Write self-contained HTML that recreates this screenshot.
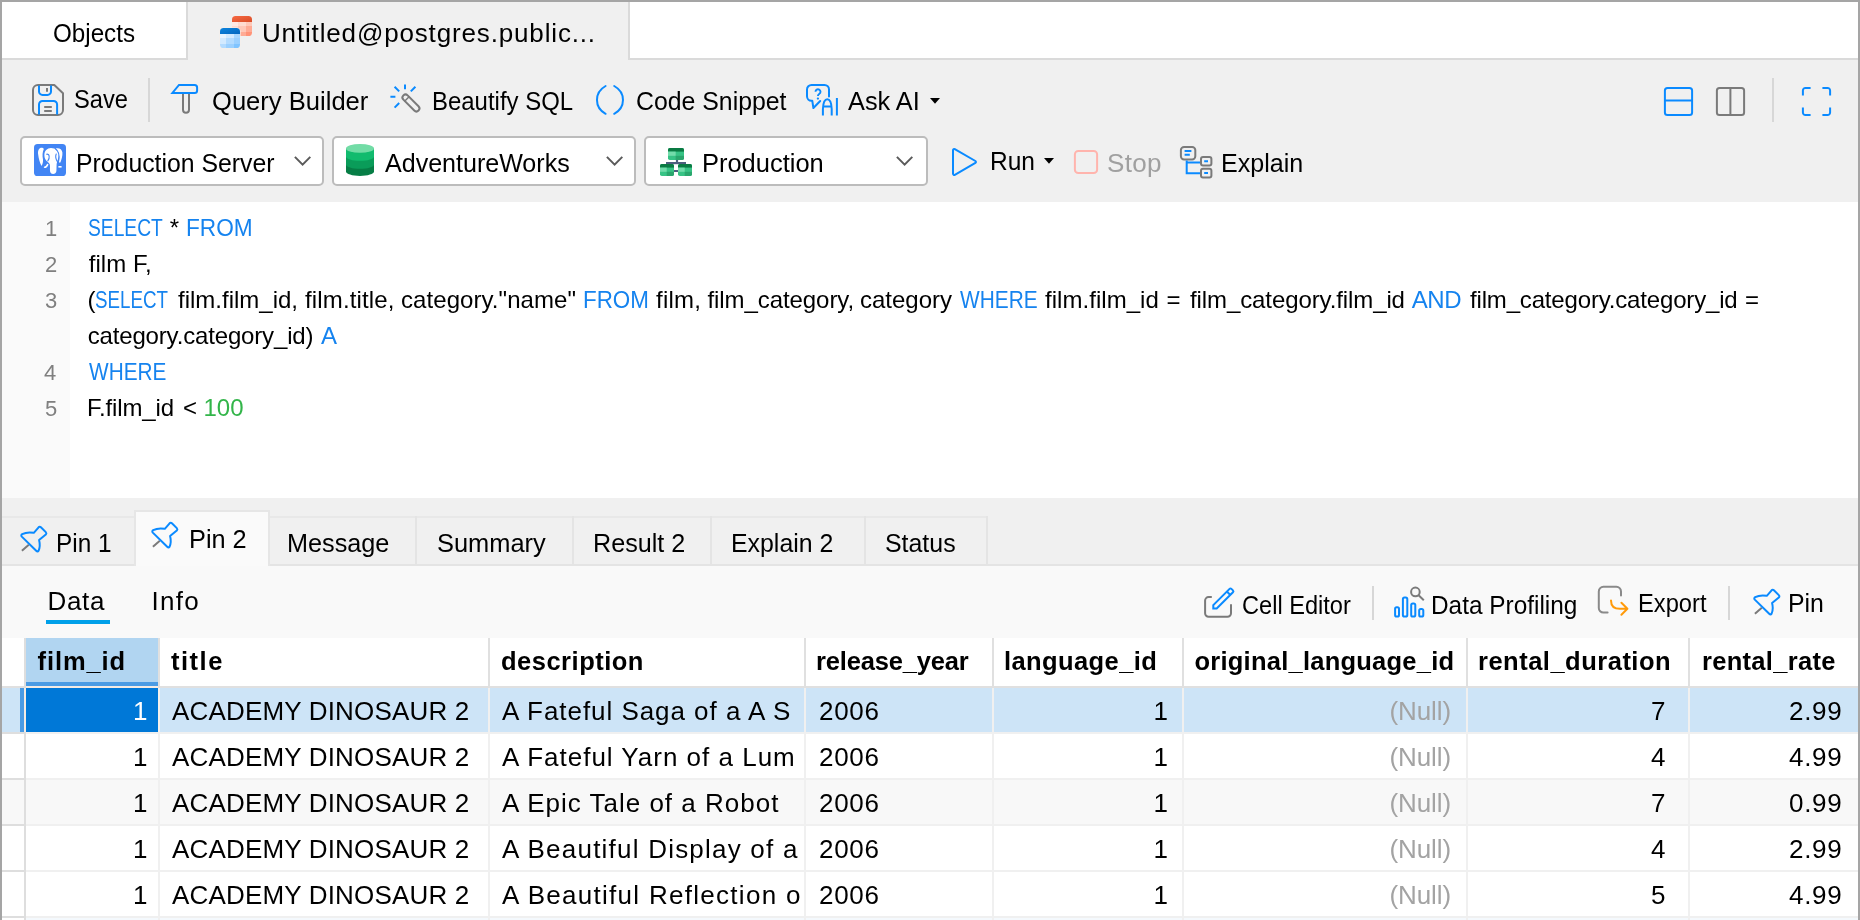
<!DOCTYPE html>
<html><head><meta charset="utf-8"><title>Navicat - Query</title>
<style>
html,body{margin:0;padding:0}
body{width:1860px;height:920px;overflow:hidden;position:relative;background:#f0f0f0;font-family:"Liberation Sans",sans-serif}
body>div{position:absolute}
svg{position:absolute;overflow:visible}
.t{position:absolute;font-size:26px;line-height:26px;white-space:pre;transform-origin:0 0}
</style></head><body>
<div style="left:0px;top:0px;width:1860px;height:60px;background:#fff;"></div>
<div style="left:188px;top:2px;width:440px;height:58px;background:#f0f0f0;"></div>
<div style="left:2px;top:58px;width:186px;height:2px;background:#dadada;"></div>
<div style="left:186px;top:2px;width:2px;height:58px;background:#dadada;"></div>
<div style="left:628px;top:2px;width:2px;height:58px;background:#dadada;"></div>
<div style="left:630px;top:58px;width:1228px;height:2px;background:#dadada;"></div>
<div style="left:0px;top:60px;width:1860px;height:142px;background:#f0f0f0;"></div>
<div style="left:148px;top:78px;width:2px;height:44px;background:#d7d7d7;"></div>
<div style="left:1772px;top:78px;width:2px;height:44px;background:#d7d7d7;"></div>
<div style="left:20px;top:136px;width:300px;height:46px;background:#fff;border:2px solid #bcbcbc;border-radius:5px;box-sizing:content-box"></div>
<div style="left:332px;top:136px;width:300px;height:46px;background:#fff;border:2px solid #bcbcbc;border-radius:5px;box-sizing:content-box"></div>
<div style="left:644px;top:136px;width:280px;height:46px;background:#fff;border:2px solid #bcbcbc;border-radius:5px;box-sizing:content-box"></div>
<div style="left:0px;top:202px;width:1860px;height:296px;background:#fff;"></div>
<div style="left:2px;top:202px;width:68px;height:296px;background:#fafafa;"></div>
<div style="left:0px;top:498px;width:1860px;height:67px;background:#f0f0f0;"></div>
<div style="left:0px;top:565px;width:1860px;height:73px;background:#f9f9f9;"></div>
<div style="left:2px;top:516px;width:986px;height:2px;background:#e8e8e8;"></div>
<div style="left:2px;top:564px;width:1856px;height:2px;background:#e4e4e4;"></div>
<div style="left:415px;top:516px;width:2px;height:49px;background:#e4e4e4;"></div>
<div style="left:572px;top:516px;width:2px;height:49px;background:#e4e4e4;"></div>
<div style="left:710px;top:516px;width:2px;height:49px;background:#e4e4e4;"></div>
<div style="left:864px;top:516px;width:2px;height:49px;background:#e4e4e4;"></div>
<div style="left:986px;top:516px;width:2px;height:49px;background:#e4e4e4;"></div>
<div style="left:268px;top:516px;width:2px;height:49px;background:#e4e4e4;"></div>
<div style="left:134px;top:510px;width:132px;height:54px;background:#fafafa;border:2px solid #e6e6e6;border-bottom:none;box-sizing:content-box"></div>
<div style="left:46px;top:620px;width:64px;height:4px;background:#00a0e9;"></div>
<div style="left:1372px;top:586px;width:2px;height:34px;background:#d7d7d7;"></div>
<div style="left:1728px;top:586px;width:2px;height:34px;background:#d7d7d7;"></div>
<div style="left:2px;top:638px;width:1856px;height:282px;background:#fff;"></div>
<div style="left:26px;top:638px;width:132px;height:48px;background:#b1d5f1;"></div>
<div style="left:26px;top:682px;width:132px;height:4px;background:#4a9be4;"></div>
<div style="left:2px;top:686px;width:1856px;height:2px;background:#e0e0e0;"></div>
<div style="left:2px;top:688px;width:1856px;height:44px;background:#cde4f7;"></div>
<div style="left:2px;top:780px;width:1856px;height:44px;background:#f8f8f8;"></div>
<div style="left:20px;top:688px;width:4px;height:44px;background:#4a9be4;"></div>
<div style="left:26px;top:686px;width:132px;height:2px;background:#f3ebe4;"></div>
<div style="left:26px;top:688px;width:132px;height:44px;background:#0078d7;"></div>
<div style="left:26px;top:732px;width:1832px;height:2px;background:#f0f0f0;"></div>
<div style="left:2px;top:732px;width:22px;height:2px;background:#dedede;"></div>
<div style="left:26px;top:778px;width:1832px;height:2px;background:#f0f0f0;"></div>
<div style="left:2px;top:778px;width:22px;height:2px;background:#dedede;"></div>
<div style="left:26px;top:824px;width:1832px;height:2px;background:#f0f0f0;"></div>
<div style="left:2px;top:824px;width:22px;height:2px;background:#dedede;"></div>
<div style="left:26px;top:870px;width:1832px;height:2px;background:#f0f0f0;"></div>
<div style="left:2px;top:870px;width:22px;height:2px;background:#dedede;"></div>
<div style="left:26px;top:916px;width:1832px;height:2px;background:#f0f0f0;"></div>
<div style="left:2px;top:916px;width:22px;height:2px;background:#dedede;"></div>
<div style="left:158px;top:638px;width:2px;height:282px;background:#f0f0f0;"></div>
<div style="left:488px;top:638px;width:2px;height:282px;background:#f0f0f0;"></div>
<div style="left:804px;top:638px;width:2px;height:282px;background:#f0f0f0;"></div>
<div style="left:992px;top:638px;width:2px;height:282px;background:#f0f0f0;"></div>
<div style="left:1182px;top:638px;width:2px;height:282px;background:#f0f0f0;"></div>
<div style="left:1466px;top:638px;width:2px;height:282px;background:#f0f0f0;"></div>
<div style="left:1688px;top:638px;width:2px;height:282px;background:#f0f0f0;"></div>
<div style="left:158px;top:638px;width:2px;height:50px;background:#e0e0e0;"></div>
<div style="left:488px;top:638px;width:2px;height:50px;background:#e0e0e0;"></div>
<div style="left:804px;top:638px;width:2px;height:50px;background:#e0e0e0;"></div>
<div style="left:992px;top:638px;width:2px;height:50px;background:#e0e0e0;"></div>
<div style="left:1182px;top:638px;width:2px;height:50px;background:#e0e0e0;"></div>
<div style="left:1466px;top:638px;width:2px;height:50px;background:#e0e0e0;"></div>
<div style="left:1688px;top:638px;width:2px;height:50px;background:#e0e0e0;"></div>
<div style="left:24px;top:638px;width:2px;height:282px;background:#dedede;"></div>
<div style="left:24px;top:688px;width:2px;height:44px;background:#f3ebe4;"></div>
<div style="left:158px;top:688px;width:2px;height:44px;background:#f5f1ec;"></div>
<div style="left:26px;top:918px;width:1832px;height:2px;background:#f4f9fd;"></div>
<div style="left:158px;top:918px;width:2px;height:2px;background:#f0f0f0;"></div>
<div style="left:488px;top:918px;width:2px;height:2px;background:#f0f0f0;"></div>
<div style="left:804px;top:918px;width:2px;height:2px;background:#f0f0f0;"></div>
<div style="left:992px;top:918px;width:2px;height:2px;background:#f0f0f0;"></div>
<div style="left:1182px;top:918px;width:2px;height:2px;background:#f0f0f0;"></div>
<div style="left:1466px;top:918px;width:2px;height:2px;background:#f0f0f0;"></div>
<div style="left:1688px;top:918px;width:2px;height:2px;background:#f0f0f0;"></div>
<div style="left:0px;top:0px;width:1860px;height:2px;background:#a5a5a5;"></div>
<div style="left:0px;top:0px;width:2px;height:920px;background:#a5a5a5;"></div>
<div style="left:1858px;top:0px;width:2px;height:920px;background:#a5a5a5;"></div>
<svg style="left:220px;top:16px" width="32" height="32" viewBox="0 0 32 32" fill="none" stroke-linecap="round" stroke-linejoin="round" ><defs><clipPath id="rt"><rect x="12" y="0" width="20" height="20" rx="3.6"/></clipPath><linearGradient id="rtg" x1="0" y1="0" x2="1" y2="1"><stop offset="0" stop-color="#f76a43"/><stop offset="1" stop-color="#d84c27"/></linearGradient></defs><g clip-path="url(#rt)" stroke="none"><rect x="12" y="0" width="20" height="6.2" fill="url(#rtg)"/><rect x="12" y="6" width="6" height="4" fill="#ffe9e4"/><rect x="18" y="6" width="8" height="4" fill="#ffdbd0"/><rect x="26" y="6" width="6" height="4" fill="#ffc8b8"/><rect x="12" y="10" width="6" height="6" fill="#ffdbd0"/><rect x="18" y="10" width="8" height="6" fill="#ffc8b8"/><rect x="26" y="10" width="6" height="6" fill="#ffab95"/><rect x="12" y="16" width="6" height="4" fill="#ffc8b8"/><rect x="18" y="16" width="8" height="4" fill="#ffab95"/><rect x="26" y="16" width="6" height="4" fill="#ff9378"/></g><rect x="-0.6" y="11.4" width="21.2" height="21.2" rx="4.2" fill="#f6efe9" stroke="none"/><defs><clipPath id="bt"><rect x="0" y="12" width="20" height="20" rx="3.6"/></clipPath><linearGradient id="btg" x1="0" y1="0" x2="1" y2="1"><stop offset="0" stop-color="#0c84de"/><stop offset="1" stop-color="#0566be"/></linearGradient></defs><g clip-path="url(#bt)" stroke="none"><rect x="0" y="12" width="20" height="6.2" fill="url(#btg)"/><rect x="0" y="18" width="6" height="4" fill="#e8f4ff"/><rect x="6" y="18" width="8" height="4" fill="#d3eaff"/><rect x="14" y="18" width="6" height="4" fill="#a9d7ff"/><rect x="0" y="22" width="6" height="6" fill="#d3eaff"/><rect x="6" y="22" width="8" height="6" fill="#b3dbff"/><rect x="14" y="22" width="6" height="6" fill="#9bd0ff"/><rect x="0" y="28" width="6" height="4" fill="#b3dbff"/><rect x="6" y="28" width="8" height="4" fill="#9bd0ff"/><rect x="14" y="28" width="6" height="4" fill="#80c4ff"/></g></svg>
<svg style="left:32px;top:84px" width="32" height="32" viewBox="0 0 32 32" fill="none" stroke-linecap="round" stroke-linejoin="round" ><path d="M6 1H22.3L31 9.2V26a5 5 0 0 1-5 5H6a5 5 0 0 1-5-5V6A5 5 0 0 1 6 1Z" stroke="#7a7a7a" stroke-width="2"/><path d="M7 1.6V7.4a3.5 3.5 0 0 0 3.5 3.5H15.5A3.5 3.5 0 0 0 19 7.4V1.6" stroke="#0a8aff" stroke-width="2" stroke-linecap="butt"/><path d="M15 4V7.7" stroke="#7a7a7a" stroke-width="2" stroke-linecap="butt"/><path d="M7 30.4V20.4a3.5 3.5 0 0 1 3.5-3.5H21.6a3.5 3.5 0 0 1 3.5 3.5V30.4" stroke="#0a8aff" stroke-width="2" stroke-linecap="butt"/><path d="M12.2 23H19.8M12.2 27H19.8" stroke="#7a7a7a" stroke-width="2" stroke-linecap="butt"/></svg>
<svg style="left:170px;top:84px" width="30" height="30" viewBox="0 0 30 30" fill="none" stroke-linecap="round" stroke-linejoin="round" ><path d="M13 9.8V25.8a3 3 0 0 0 6 0V9.8" stroke="#7a7a7a" stroke-width="2" stroke-linecap="butt"/><path d="M9 .9H24.6a2.5 2.5 0 0 1 2.5 2.5V6.4a2.5 2.5 0 0 1-2.5 2.5H2.4Z" stroke="#0a8aff" stroke-width="2" stroke-linejoin="miter"/></svg>
<svg style="left:390px;top:84px" width="32" height="30" viewBox="0 0 32 30" fill="none" stroke-linecap="round" stroke-linejoin="round" ><g transform="rotate(-45 20.8 18.8)"><rect x="17.8" y="8.3" width="6" height="21.4" rx="3" stroke="#7a7a7a" stroke-width="2"/><path d="M17.8 13.4H23.8" stroke="#7a7a7a" stroke-width="1.4"/></g><path d="M15 .6V5.2M4.6 2.8L9.2 7.4M25.4 2.8L20.8 7.4M.4 12.8H5.4M9.2 19L4.6 23.6" stroke="#0a8aff" stroke-width="2" stroke-linecap="butt"/></svg>
<svg style="left:595px;top:84px" width="30" height="32" viewBox="0 0 30 32" fill="none" stroke-linecap="round" stroke-linejoin="round" ><path d="M10.6 2C-.9 8.5-.9 23.5 10.6 29.8M19.2 2C30.9 8.5 30.9 23.5 19.2 29.8" stroke="#0a8aff" stroke-width="2"/></svg>
<svg style="left:806px;top:84px" width="34" height="32" viewBox="0 0 34 32" fill="none" stroke-linecap="round" stroke-linejoin="round" ><path d="M23 12.6V5.4A4.5 4.5 0 0 0 18.5 .9H5.5A4.5 4.5 0 0 0 1 5.4V12.3a4.5 4.5 0 0 0 4.5 4.5H6.3L7.4 24L14.2 17" stroke="#0a8aff" stroke-width="2"/><path d="M16.9 31.6V25Q17.3 15.2 21.3 15.2Q25.3 15.2 25.7 25V31.6M16.9 22.4H25.7M30.9 14.1V31.6" stroke="#0a8aff" stroke-width="2" stroke-linecap="butt"/><path d="M9.5 7.7A2.5 2.4 0 1 1 13.4 9.7C12.4 10.4 11.9 10.9 11.9 12" stroke="#0a8aff" stroke-width="1.9" stroke-linecap="butt"/><circle cx="11.9" cy="14.6" r="1.15" fill="#0a8aff" stroke="none"/></svg>
<svg style="left:930px;top:98px" width="10" height="6" viewBox="0 0 10 6" fill="none" stroke-linecap="round" stroke-linejoin="round" ><path d="M0 0H10L5 5.8Z" fill="#000" stroke="none"/></svg>
<svg style="left:1044px;top:158px" width="10" height="6" viewBox="0 0 10 6" fill="none" stroke-linecap="round" stroke-linejoin="round" ><path d="M0 0H10L5 5.8Z" fill="#000" stroke="none"/></svg>
<svg style="left:1664px;top:87px" width="29" height="29" viewBox="0 0 29 29" fill="none" stroke-linecap="round" stroke-linejoin="round" ><rect x=".9" y=".9" width="27.2" height="27.2" rx="2.6" stroke="#0a8aff" stroke-width="2"/><path d="M1 13.4H28" stroke="#0a8aff" stroke-width="2"/></svg>
<svg style="left:1716px;top:87px" width="29" height="29" viewBox="0 0 29 29" fill="none" stroke-linecap="round" stroke-linejoin="round" ><rect x=".9" y=".9" width="27.2" height="27.2" rx="2.6" stroke="#7a7a7a" stroke-width="2"/><path d="M14.4 1V28" stroke="#7a7a7a" stroke-width="2"/></svg>
<svg style="left:1802px;top:87px" width="29" height="29" viewBox="0 0 29 29" fill="none" stroke-linecap="round" stroke-linejoin="round" ><path d="M.9 8.4V3.4A2.5 2.5 0 0 1 3.4 .9H8.6M20.4 .9H25.6A2.5 2.5 0 0 1 28.1 3.4V8.4M28.1 20.6V25.6A2.5 2.5 0 0 1 25.6 28.1H20.4M8.6 28.1H3.4A2.5 2.5 0 0 1 .9 25.6V20.6" stroke="#0a8aff" stroke-width="2" stroke-linecap="butt"/></svg>
<svg style="left:34px;top:144px" width="32" height="32" viewBox="0 0 32 32" fill="none" stroke-linecap="round" stroke-linejoin="round" ><rect x="0" y="0" width="32" height="32" rx="3.6" fill="#4285f4" stroke="none"/><path d="M8 3.8C5.2 3.6 3.6 6.2 4.1 10C4.6 14.6 6 19.6 7.6 22C8.6 20.4 9.2 18 9 15.6C8.2 12 8.4 8 9.8 5C9.4 4.2 8.8 3.8 8 3.8Z" fill="#fff" stroke="none"/><path d="M21.6 4.6C24.6 3.4 28 5 28.4 8.4C28.7 11.8 27.4 15.6 26.4 18.6C25.6 19 24.8 18.4 24.8 17.6C25.8 13.6 25.4 8.4 21.6 4.6Z" fill="#fff" stroke="none"/><path d="M10.4 11.4C10.2 6.8 13.2 4 17 4C21.4 4 24.6 6.8 24.8 10.4C24.8 13.6 23.4 16.4 22.8 19C22.4 21.2 22.6 24.6 22.4 27C22.2 29 20.8 30 19.2 30C17.4 30 16.2 29 16 27C15.8 24.6 16.2 22.4 15.8 20.6C15.4 18.8 12.4 17.4 11.2 15C10.6 13.8 10.4 12.6 10.4 11.4Z" fill="#fff" stroke="none"/><path d="M21.4 4.8C24.6 7 25.8 11.6 24.6 17.4" stroke="#4285f4" stroke-width="1.1"/><path d="M12.6 10.2C15.4 9.6 16.2 13.6 13.8 16.8" stroke="#4285f4" stroke-width="1.1"/><path d="M22.2 10C21.2 12.4 22 15.4 23.4 17.6" stroke="#4285f4" stroke-width="1.1"/><path d="M10.6 23.2C12 23.2 13 22.2 13.6 20.6" stroke="#fff" stroke-width="1.6"/><path d="M24.4 22.8H27.6" stroke="#fff" stroke-width="1.6" stroke-linecap="butt"/></svg>
<svg style="left:294.4px;top:156.4px" width="18" height="10" viewBox="0 0 18 10" fill="none" stroke-linecap="round" stroke-linejoin="round" ><path d="M.9 .9L8.6 8.6L16.3 .9" stroke="#5a5a5a" stroke-width="2" stroke-linecap="butt" stroke-linejoin="miter"/></svg>
<svg style="left:606px;top:156.4px" width="18" height="10" viewBox="0 0 18 10" fill="none" stroke-linecap="round" stroke-linejoin="round" ><path d="M.9 .9L8.6 8.6L16.3 .9" stroke="#5a5a5a" stroke-width="2" stroke-linecap="butt" stroke-linejoin="miter"/></svg>
<svg style="left:896.4px;top:156.4px" width="18" height="10" viewBox="0 0 18 10" fill="none" stroke-linecap="round" stroke-linejoin="round" ><path d="M.9 .9L8.6 8.6L16.3 .9" stroke="#5a5a5a" stroke-width="2" stroke-linecap="butt" stroke-linejoin="miter"/></svg>
<svg style="left:346px;top:144px" width="28" height="32" viewBox="0 0 28 32" fill="none" stroke-linecap="round" stroke-linejoin="round" ><g stroke="none"><path d="M0 4.4V27.6C0 30 6.3 32 14 32S28 30 28 27.6V4.4Z" fill="#067d45"/><path d="M0 4.4V20.4C0 22.8 6.3 24.8 14 24.8S28 22.8 28 20.4V4.4Z" fill="#0a9c59"/><path d="M0 4.4V12.4C0 14.8 6.3 16.8 14 16.8S28 14.8 28 12.4V4.4Z" fill="#11bb6e"/><ellipse cx="14" cy="4.4" rx="14" ry="4.4" fill="#72dca6"/></g></svg>
<svg style="left:660px;top:148px" width="32" height="28" viewBox="0 0 32 28" fill="none" stroke-linecap="round" stroke-linejoin="round" ><g stroke="none" fill="#4d5f7e"><rect x="15.9" y="11" width="2.2" height="4"/><rect x="6" y="14" width="20" height="2.2"/><rect x="13" y="22" width="6" height="2"/></g><defs><clipPath id="s1"><rect x="8" y="0" width="16" height="12" rx="1.8"/></clipPath></defs><g clip-path="url(#s1)" stroke="none"><rect x="8" y="0" width="16" height="12" fill="#37c385"/><rect x="8" y="0" width="16" height="3.6" fill="#0a7a43"/><rect x="8" y="3.6" width="7.68" height="4.2" fill="#73dcab"/><rect x="15.68" y="7.8" width="8.32" height="4.2" fill="#2aa66d"/></g><defs><clipPath id="s2"><rect x="0" y="16" width="14" height="12" rx="1.8"/></clipPath></defs><g clip-path="url(#s2)" stroke="none"><rect x="0" y="16" width="14" height="12" fill="#37c385"/><rect x="0" y="16" width="14" height="3.6" fill="#0a7a43"/><rect x="0" y="19.6" width="6.72" height="4.2" fill="#73dcab"/><rect x="6.72" y="23.8" width="7.28" height="4.2" fill="#2aa66d"/></g><defs><clipPath id="s3"><rect x="18" y="16" width="14" height="12" rx="1.8"/></clipPath></defs><g clip-path="url(#s3)" stroke="none"><rect x="18" y="16" width="14" height="12" fill="#37c385"/><rect x="18" y="16" width="14" height="3.6" fill="#0a7a43"/><rect x="18" y="19.6" width="6.72" height="4.2" fill="#73dcab"/><rect x="24.72" y="23.8" width="7.28" height="4.2" fill="#2aa66d"/></g></svg>
<svg style="left:952px;top:148px" width="26" height="28" viewBox="0 0 26 28" fill="none" stroke-linecap="round" stroke-linejoin="round" ><path d="M1 2.2V25.8a1.2 1.2 0 0 0 1.8 1L23.4 14.9a1.1 1.1 0 0 0 0-1.9L2.8 1.2A1.2 1.2 0 0 0 1 2.2Z" stroke="#0a8aff" stroke-width="2"/></svg>
<svg style="left:1074px;top:150px" width="24" height="24" viewBox="0 0 24 24" fill="none" stroke-linecap="round" stroke-linejoin="round" ><rect x=".9" y=".9" width="22.2" height="22.2" rx="3.4" stroke="#ffb4ad" stroke-width="2"/></svg>
<svg style="left:1180px;top:146px" width="33" height="32" viewBox="0 0 33 32" fill="none" stroke-linecap="round" stroke-linejoin="round" ><rect x=".9" y=".9" width="14.4" height="12.6" rx="3.2" stroke="#7a7a7a" stroke-width="2"/><path d="M4.6 5H11.4M4.6 8.7H9.8" stroke="#0a8aff" stroke-width="2" stroke-linecap="butt"/><path d="M6.7 14.4V27.2H20.4M6.7 16.4H20.4" stroke="#0a8aff" stroke-width="2" stroke-linecap="butt" stroke-linejoin="miter"/><rect x="21" y="11" width="10.4" height="8.6" rx="2" stroke="#7a7a7a" stroke-width="2" fill="#f0f0f0"/><rect x="21" y="22.8" width="10.4" height="8.6" rx="2" stroke="#7a7a7a" stroke-width="2" fill="#f0f0f0"/><path d="M24.2 15.3H28M24.2 27.1H28" stroke="#0a8aff" stroke-width="2" stroke-linecap="butt"/></svg>
<svg style="left:19px;top:525px" width="29" height="28" viewBox="0 0 29 28" fill="none" stroke-linecap="round" stroke-linejoin="round" ><path d="M9.8 19.7L2.9 25.8" stroke="#7a7a7a" stroke-width="2" stroke-linecap="butt"/><path d="M14.8 7.8L19.6 2.3Q20.7 1.1 21.9 2.2L26.8 7.1Q27.9 8.3 26.8 9.5L20.1 15.1Q21.6 21.4 19.6 25.6Q18.6 27.2 17.2 25.8L2.8 11.6Q1.6 10.2 3.2 9.2Q8 6.6 14.8 7.8Z" stroke="#0a8aff" stroke-width="2"/></svg>
<svg style="left:150px;top:521px" width="29" height="28" viewBox="0 0 29 28" fill="none" stroke-linecap="round" stroke-linejoin="round" ><path d="M9.8 19.7L2.9 25.8" stroke="#7a7a7a" stroke-width="2" stroke-linecap="butt"/><path d="M14.8 7.8L19.6 2.3Q20.7 1.1 21.9 2.2L26.8 7.1Q27.9 8.3 26.8 9.5L20.1 15.1Q21.6 21.4 19.6 25.6Q18.6 27.2 17.2 25.8L2.8 11.6Q1.6 10.2 3.2 9.2Q8 6.6 14.8 7.8Z" stroke="#0a8aff" stroke-width="2"/></svg>
<svg style="left:1752px;top:588px" width="29" height="28" viewBox="0 0 29 28" fill="none" stroke-linecap="round" stroke-linejoin="round" ><path d="M9.8 19.7L2.9 25.8" stroke="#7a7a7a" stroke-width="2" stroke-linecap="butt"/><path d="M14.8 7.8L19.6 2.3Q20.7 1.1 21.9 2.2L26.8 7.1Q27.9 8.3 26.8 9.5L20.1 15.1Q21.6 21.4 19.6 25.6Q18.6 27.2 17.2 25.8L2.8 11.6Q1.6 10.2 3.2 9.2Q8 6.6 14.8 7.8Z" stroke="#0a8aff" stroke-width="2"/></svg>
<svg style="left:1204px;top:587px" width="32" height="32" viewBox="0 0 32 32" fill="none" stroke-linecap="round" stroke-linejoin="round" ><path d="M7.8 10.1H4.6A3.5 3.5 0 0 0 1.1 13.6V26.2A3.5 3.5 0 0 0 4.6 29.7H23.5A3.5 3.5 0 0 0 27 26.2V17.2" stroke="#7a7a7a" stroke-width="2" stroke-linecap="butt"/><g transform="translate(9.3 21.5) rotate(45)"><path d="M0 0L-2.4-2.4V-25.4a1.3 1.3 0 0 1 1.3-1.3H1.1a1.3 1.3 0 0 1 1.3 1.3V-2.4ZM-2.4-21.6H2.4" stroke="#0a8aff" stroke-width="2" stroke-linejoin="miter"/></g></svg>
<svg style="left:1393px;top:586px" width="32" height="32" viewBox="0 0 32 32" fill="none" stroke-linecap="round" stroke-linejoin="round" ><rect x="2.1" y="21.2" width="3.9" height="9.4" rx="1.6" stroke="#0a8aff" stroke-width="2"/><rect x="9.9" y="11.4" width="4.4" height="19.2" rx="1.6" stroke="#0a8aff" stroke-width="2"/><rect x="18.2" y="17.5" width="4.1" height="13.1" rx="1.6" stroke="#0a8aff" stroke-width="2"/><rect x="26.2" y="23" width="4.1" height="7.6" rx="1.6" stroke="#0a8aff" stroke-width="2"/><circle cx="22.4" cy="5.9" r="4.3" stroke="#7a7a7a" stroke-width="2"/><path d="M25.6 9.2L30.8 14.2" stroke="#7a7a7a" stroke-width="2" stroke-linecap="butt"/></svg>
<svg style="left:1598px;top:586px" width="31" height="30" viewBox="0 0 31 30" fill="none" stroke-linecap="round" stroke-linejoin="round" ><path d="M9.6 26.6H5.4A4.6 4.6 0 0 1 .8 22V5.4A4.6 4.6 0 0 1 5.4 .8H18.4A4.6 4.6 0 0 1 23 5.4V9.6" stroke="#8a8a8a" stroke-width="2"/><path d="M13 14.4C13 20 16.6 22.8 22 22.8H28.8M23.4 16.8L29.4 22.8L23.4 28.8" stroke="#ff9a0a" stroke-width="2"/></svg>
<div id="tx" style="left:0;top:0;width:1860px;height:920px;will-change:transform">
<span class="t" style="left:53.00px;top:20.00px;color:#000;transform:scaleX(0.9302);">Objects</span>
<span class="t" style="left:262.00px;top:20.00px;color:#000;letter-spacing:0.846px;">Untitled@postgres.public...</span>
<span class="t" style="left:74.00px;top:86.00px;color:#000;transform:scaleX(0.9107);">Save</span>
<span class="t" style="left:212.00px;top:88.00px;color:#000;transform:scaleX(0.9835);">Query Builder</span>
<span class="t" style="left:431.80px;top:88.00px;color:#000;transform:scaleX(0.9213);">Beautify SQL</span>
<span class="t" style="left:636.00px;top:88.00px;color:#000;transform:scaleX(0.9551);">Code Snippet</span>
<span class="t" style="left:848.20px;top:88.00px;color:#000;transform:scaleX(0.9732);">Ask AI</span>
<span class="t" style="left:75.50px;top:150.00px;color:#000;transform:scaleX(0.9539);">Production Server</span>
<span class="t" style="left:385.00px;top:150.00px;color:#000;transform:scaleX(0.9634);">AdventureWorks</span>
<span class="t" style="left:701.50px;top:150.00px;color:#000;transform:scaleX(0.9793);">Production</span>
<span class="t" style="left:989.50px;top:148.00px;color:#000;transform:scaleX(0.9432);">Run</span>
<span class="t" style="left:1107.00px;top:150.00px;color:#a0a0a0;letter-spacing:0.333px;">Stop</span>
<span class="t" style="left:1221.00px;top:150.00px;color:#000;transform:scaleX(0.9634);">Explain</span>
<span class="t" style="left:45.00px;top:216.00px;color:#7f7f7f;font-size:22px;">1</span>
<span class="t" style="left:45.00px;top:252.00px;color:#7f7f7f;font-size:22px;">2</span>
<span class="t" style="left:45.00px;top:288.00px;color:#7f7f7f;font-size:22px;">3</span>
<span class="t" style="left:44.00px;top:360.00px;color:#7f7f7f;font-size:22px;">4</span>
<span class="t" style="left:45.00px;top:396.00px;color:#7f7f7f;font-size:22px;">5</span>
<span class="t" style="left:87.75px;top:215.00px;color:#1583ef;font-size:24px;transform:scaleX(0.8016);">SELECT</span>
<span class="t" style="left:169.70px;top:215.00px;color:#000;font-size:24px;">*</span>
<span class="t" style="left:185.50px;top:215.00px;color:#1583ef;font-size:24px;transform:scaleX(0.9433);">FROM</span>
<span class="t" style="left:88.75px;top:251.00px;color:#000;font-size:24px;letter-spacing:0.042px;">film F,</span>
<span class="t" style="left:87.50px;top:287.00px;color:#000;font-size:24px;">(</span>
<span class="t" style="left:95.00px;top:287.00px;color:#1583ef;font-size:24px;transform:scaleX(0.7826);">SELECT</span>
<span class="t" style="left:178.00px;top:287.00px;color:#000;font-size:24px;">film.film_id,</span>
<span class="t" style="left:305.00px;top:287.00px;color:#000;font-size:24px;letter-spacing:0.150px;">film.title,</span>
<span class="t" style="left:401.00px;top:287.00px;color:#000;font-size:24px;letter-spacing:0.071px;">category."name"</span>
<span class="t" style="left:582.50px;top:287.00px;color:#1583ef;font-size:24px;transform:scaleX(0.9328);">FROM</span>
<span class="t" style="left:656.00px;top:287.00px;color:#000;font-size:24px;letter-spacing:0.250px;">film,</span>
<span class="t" style="left:707.50px;top:287.00px;color:#000;font-size:24px;letter-spacing:-0.077px;">film_category,</span>
<span class="t" style="left:860.00px;top:287.00px;color:#000;font-size:24px;">category</span>
<span class="t" style="left:959.50px;top:287.00px;color:#1583ef;font-size:24px;transform:scaleX(0.8693);">WHERE</span>
<span class="t" style="left:1045.00px;top:287.00px;color:#000;font-size:24px;letter-spacing:0.045px;">film.film_id</span>
<span class="t" style="left:1166.50px;top:287.00px;color:#000;font-size:24px;">=</span>
<span class="t" style="left:1190.00px;top:287.00px;color:#000;font-size:24px;letter-spacing:-0.100px;">film_category.film_id</span>
<span class="t" style="left:1411.70px;top:287.00px;color:#1583ef;font-size:24px;letter-spacing:-0.350px;">AND</span>
<span class="t" style="left:1470.00px;top:287.00px;color:#000;font-size:24px;letter-spacing:-0.167px;">film_category.category_id</span>
<span class="t" style="left:1745.00px;top:287.00px;color:#000;font-size:24px;">=</span>
<span class="t" style="left:87.70px;top:323.00px;color:#000;font-size:24px;letter-spacing:-0.160px;">category.category_id)</span>
<span class="t" style="left:321.00px;top:323.00px;color:#1583ef;font-size:24px;">A</span>
<span class="t" style="left:88.75px;top:359.00px;color:#1583ef;font-size:24px;transform:scaleX(0.8665);">WHERE</span>
<span class="t" style="left:87.00px;top:395.00px;color:#000;font-size:24px;letter-spacing:-0.125px;">F.film_id</span>
<span class="t" style="left:183.00px;top:395.00px;color:#000;font-size:24px;">&lt;</span>
<span class="t" style="left:203.50px;top:395.00px;color:#33b54a;font-size:24px;">100</span>
<span class="t" style="left:55.50px;top:530.00px;color:#000;transform:scaleX(0.9375);">Pin 1</span>
<span class="t" style="left:189.00px;top:526.00px;color:#000;transform:scaleX(0.9732);">Pin 2</span>
<span class="t" style="left:287.00px;top:530.00px;color:#000;transform:scaleX(0.9706);">Message</span>
<span class="t" style="left:437.00px;top:530.00px;color:#000;transform:scaleX(0.9771);">Summary</span>
<span class="t" style="left:593.00px;top:530.00px;color:#000;transform:scaleX(0.9674);">Result 2</span>
<span class="t" style="left:731.00px;top:530.00px;color:#000;transform:scaleX(0.9567);">Explain 2</span>
<span class="t" style="left:885.00px;top:530.00px;color:#000;transform:scaleX(0.9577);">Status</span>
<span class="t" style="left:47.50px;top:588.00px;color:#000;letter-spacing:0.667px;">Data</span>
<span class="t" style="left:151.60px;top:588.00px;color:#000;letter-spacing:1.267px;">Info</span>
<span class="t" style="left:1242.00px;top:592.00px;color:#000;transform:scaleX(0.9076);">Cell Editor</span>
<span class="t" style="left:1431.00px;top:592.00px;color:#000;transform:scaleX(0.9375);">Data Profiling</span>
<span class="t" style="left:1637.50px;top:590.00px;color:#000;transform:scaleX(0.9110);">Export</span>
<span class="t" style="left:1787.50px;top:590.00px;color:#000;transform:scaleX(0.9559);">Pin</span>
<span class="t" style="left:37.50px;top:648.00px;color:#000;font-weight:700;font-size:25.5px;letter-spacing:0.917px;">film_id</span>
<span class="t" style="left:171.00px;top:648.00px;color:#000;font-weight:700;font-size:25.5px;letter-spacing:1.500px;">title</span>
<span class="t" style="left:501.00px;top:648.00px;color:#000;font-weight:700;font-size:25.5px;letter-spacing:0.500px;">description</span>
<span class="t" style="left:816.00px;top:648.00px;color:#000;font-weight:700;font-size:25.5px;letter-spacing:-0.182px;">release_year</span>
<span class="t" style="left:1004.00px;top:648.00px;color:#000;font-weight:700;font-size:25.5px;letter-spacing:0.400px;">language_id</span>
<span class="t" style="left:1194.50px;top:648.00px;color:#000;font-weight:700;font-size:25.5px;letter-spacing:0.237px;">original_language_id</span>
<span class="t" style="left:1478.00px;top:648.00px;color:#000;font-weight:700;font-size:25.5px;letter-spacing:0.500px;">rental_duration</span>
<span class="t" style="left:1702.00px;top:648.00px;color:#000;font-weight:700;font-size:25.5px;letter-spacing:0.300px;">rental_rate</span>
<span class="t" style="left:133.00px;top:698.00px;color:#fff;">1</span>
<span class="t" style="left:172.00px;top:698.00px;color:#000;letter-spacing:0.176px;">ACADEMY DINOSAUR 2</span>
<span class="t" style="left:502.00px;top:698.00px;color:#000;letter-spacing:0.955px;">A Fateful Saga of a A S</span>
<span class="t" style="left:819.00px;top:698.00px;color:#000;letter-spacing:0.667px;">2006</span>
<span class="t" style="left:1153.50px;top:698.00px;color:#000;">1</span>
<span class="t" style="left:1389.50px;top:698.00px;color:#a3a3a3;letter-spacing:-0.100px;">(Null)</span>
<span class="t" style="left:1651.00px;top:698.00px;color:#000;">7</span>
<span class="t" style="left:1789.00px;top:698.00px;color:#000;letter-spacing:0.667px;">2.99</span>
<span class="t" style="left:133.00px;top:744.00px;color:#000;">1</span>
<span class="t" style="left:172.00px;top:744.00px;color:#000;letter-spacing:0.176px;">ACADEMY DINOSAUR 2</span>
<span class="t" style="left:502.00px;top:744.00px;color:#000;letter-spacing:1.000px;">A Fateful Yarn of a Lum</span>
<span class="t" style="left:819.00px;top:744.00px;color:#000;letter-spacing:0.667px;">2006</span>
<span class="t" style="left:1153.50px;top:744.00px;color:#000;">1</span>
<span class="t" style="left:1389.50px;top:744.00px;color:#a3a3a3;letter-spacing:-0.100px;">(Null)</span>
<span class="t" style="left:1651.00px;top:744.00px;color:#000;">4</span>
<span class="t" style="left:1789.00px;top:744.00px;color:#000;letter-spacing:0.667px;">4.99</span>
<span class="t" style="left:133.00px;top:790.00px;color:#000;">1</span>
<span class="t" style="left:172.00px;top:790.00px;color:#000;letter-spacing:0.176px;">ACADEMY DINOSAUR 2</span>
<span class="t" style="left:502.00px;top:790.00px;color:#000;letter-spacing:1.000px;">A Epic Tale of a Robot</span>
<span class="t" style="left:819.00px;top:790.00px;color:#000;letter-spacing:0.667px;">2006</span>
<span class="t" style="left:1153.50px;top:790.00px;color:#000;">1</span>
<span class="t" style="left:1389.50px;top:790.00px;color:#a3a3a3;letter-spacing:-0.100px;">(Null)</span>
<span class="t" style="left:1651.00px;top:790.00px;color:#000;">7</span>
<span class="t" style="left:1789.00px;top:790.00px;color:#000;letter-spacing:0.667px;">0.99</span>
<span class="t" style="left:133.00px;top:836.00px;color:#000;">1</span>
<span class="t" style="left:172.00px;top:836.00px;color:#000;letter-spacing:0.176px;">ACADEMY DINOSAUR 2</span>
<span class="t" style="left:502.00px;top:836.00px;color:#000;letter-spacing:1.217px;">A Beautiful Display of a</span>
<span class="t" style="left:819.00px;top:836.00px;color:#000;letter-spacing:0.667px;">2006</span>
<span class="t" style="left:1153.50px;top:836.00px;color:#000;">1</span>
<span class="t" style="left:1389.50px;top:836.00px;color:#a3a3a3;letter-spacing:-0.100px;">(Null)</span>
<span class="t" style="left:1651.00px;top:836.00px;color:#000;">4</span>
<span class="t" style="left:1789.00px;top:836.00px;color:#000;letter-spacing:0.667px;">2.99</span>
<span class="t" style="left:133.00px;top:882.00px;color:#000;">1</span>
<span class="t" style="left:172.00px;top:882.00px;color:#000;letter-spacing:0.176px;">ACADEMY DINOSAUR 2</span>
<span class="t" style="left:502.00px;top:882.00px;color:#000;letter-spacing:1.283px;">A Beautiful Reflection o</span>
<span class="t" style="left:819.00px;top:882.00px;color:#000;letter-spacing:0.667px;">2006</span>
<span class="t" style="left:1153.50px;top:882.00px;color:#000;">1</span>
<span class="t" style="left:1389.50px;top:882.00px;color:#a3a3a3;letter-spacing:-0.100px;">(Null)</span>
<span class="t" style="left:1651.00px;top:882.00px;color:#000;">5</span>
<span class="t" style="left:1789.00px;top:882.00px;color:#000;letter-spacing:0.667px;">4.99</span>
</div>
</body></html>
